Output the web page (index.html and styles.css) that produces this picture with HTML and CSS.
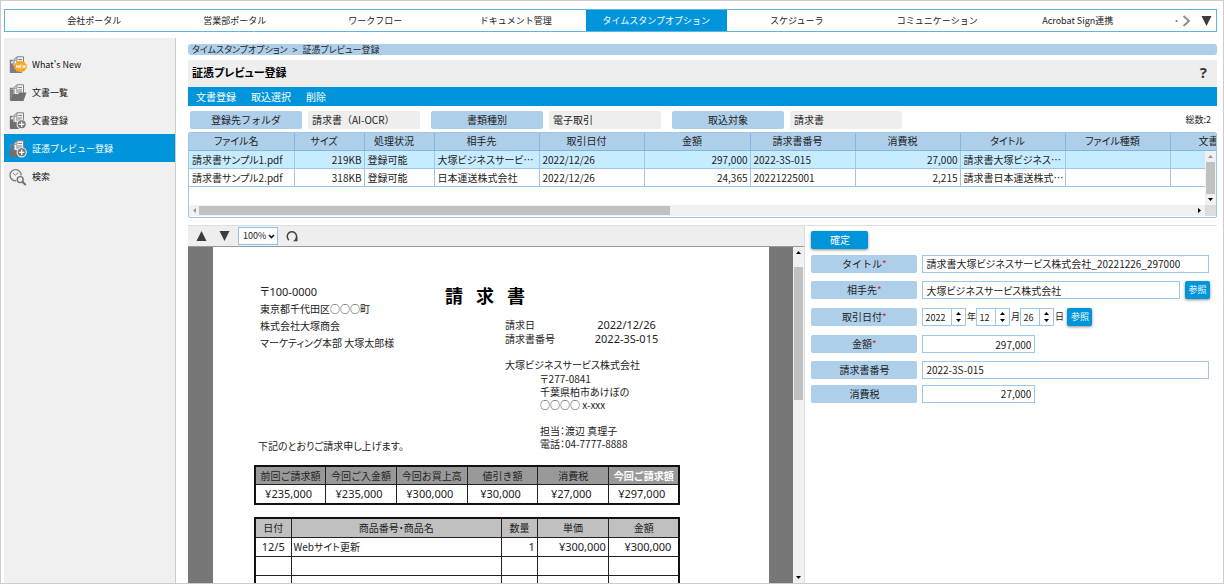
FILE: index.html
```html
<!DOCTYPE html>
<html lang="ja">
<head>
<meta charset="utf-8">
<meta name="viewport" content="width=device-width, initial-scale=1">
<title>証憑プレビュー登録</title>
<link rel="stylesheet" href="styles.css">
</head>
<body>
<svg class="defs" aria-hidden="true">
  <symbol id="i-back" viewBox="0 0 18 18">
    <path d="M1.5 16V4.5H4" fill="none" stroke="#808080" stroke-width="1.4"/>
    <path d="M5 12V3.4L8 .8h6.5V12z" fill="#f4f4f4" stroke="#808080"/>
    <path d="M5.2 4.2H8V1.2M9.3 3.5h3.7M7 6h6M7 8h6" fill="none" stroke="#808080"/>
  </symbol>
  <symbol id="i-new" viewBox="0 0 18 18">
    <use href="#i-back"/>
    <path d="M1 17V8l3-1v3h9v7z" fill="#7d7d7d"/>
    <path d="M11.5 4.5l1.8 1 2-.1.9 1.9 1.6 1.2-.2 2 .2 2-1.6 1.2-.9 1.9-2-.1-1.8 1-1.8-1-2 .1-.9-1.9-1.6-1.2.2-2-.2-2 1.600-1.200.9-1.900 2 .1z" fill="#f9a825"/>
    <path d="M7.500 12V9l2 3V9M12.600 9h-1.800v3h1.800M10.800 10.500h1.600M13.600 9l.7 3 .7-2.500.7 2.500.7-3" fill="none" stroke="#fff" stroke-width=".7"/>
  </symbol>
  <symbol id="i-open" viewBox="0 0 18 18">
    <use href="#i-back"/>
    <path d="M1.500 16.500V6L4.500 5v6z" fill="#808080"/>
    <path d="M1 17L4.500 10H9l1.500-1.500h7L14.500 17z" fill="#707070"/>
  </symbol>
  <symbol id="i-add" viewBox="0 0 18 18">
    <use href="#i-back"/>
    <path d="M1 17V8l3-1v3h9v7z" fill="#707070"/>
    <circle cx="12.700" cy="12.300" r="4.600" fill="#777" stroke="#f0f0f0" stroke-width="1.100"/>
    <path d="M12.700 9.700v5.200M10.100 12.300h5.200" stroke="#fff" stroke-width="1.300"/>
  </symbol>
  <symbol id="i-search" viewBox="0 0 18 18">
    <path d="M12.200 7.500A5.600 5.600 0 1 0 7 12.800" fill="none" stroke="#808080" stroke-width="1.400"/>
    <path d="M4 5l2.300 2.200L9.300 4.500" fill="none" stroke="#808080"/>
    <circle cx="11.200" cy="11.600" r="3" fill="none" stroke="#707070" stroke-width="1.400"/>
    <path d="M13.300 13.700l3.500 3.300" stroke="#707070" stroke-width="2"/>
  </symbol>
  <symbol id="i-up" viewBox="0 0 10 10"><path d="M5 0l5 10H0z"/></symbol>
  <symbol id="i-down" viewBox="0 0 10 10"><path d="M5 10L0 0h10z"/></symbol>
  <symbol id="i-tick-up" viewBox="0 0 5 3"><path d="M2.500 0L5 3H0z"/></symbol>
  <symbol id="i-tick-down" viewBox="0 0 5 3"><path d="M2.500 3L0 0h5z"/></symbol>
  <symbol id="i-tick-left" viewBox="0 0 3 5"><path d="M0 2.500L3 0v5z"/></symbol>
  <symbol id="i-tick-right" viewBox="0 0 3 5"><path d="M3 2.500L0 0v5z"/></symbol>
</svg>

<div class="frame">
  <nav class="tabs">
    <a href="#">会社ポータル</a>
    <a href="#">営業部ポータル</a>
    <a href="#">ワークフロー</a>
    <a href="#">ドキュメント管理</a>
    <a href="#" class="on" aria-current="page">タイムスタンプオプション</a>
    <a href="#">スケジューラ</a>
    <a href="#">コミュニケーション</a>
    <a href="#">Acrobat Sign連携</a>
    <div class="tabs-more">
      <span class="dot">・</span>
      <button class="plain" aria-label="次へ"><svg width="9" height="12" viewBox="0 0 9 12"><path d="M1.500 1l5.500 5-5.500 5" fill="none" stroke="#888" stroke-width="1.800"/></svg></button>
      <button class="plain" aria-label="メニュー"><svg width="11" height="10"><use href="#i-down"/></svg></button>
    </div>
  </nav>

  <div class="body">
    <aside class="side">
      <a href="#"><svg><use href="#i-new"/></svg>What's New</a>
      <a href="#"><svg><use href="#i-open"/></svg>文書一覧</a>
      <a href="#"><svg><use href="#i-add"/></svg>文書登録</a>
      <a href="#" class="on"><svg><use href="#i-add"/></svg>証憑プレビュー登録</a>
      <a href="#"><svg><use href="#i-search"/></svg>検索</a>
    </aside>

    <main class="main">
      <div class="crumbs"><a href="#">タイムスタンプオプション</a><span>&gt;</span><span>証憑プレビュー登録</span></div>
      <header class="title"><h1>証憑プレビュー登録</h1><button class="plain help" aria-label="ヘルプ">?</button></header>
      <div class="actions"><button>文書登録</button><button>取込選択</button><button>削除</button></div>

      <div class="filters">
        <div class="filter"><span class="tag">登録先フォルダ</span><span class="val">請求書（AI-OCR）</span></div>
        <div class="filter"><span class="tag">書類種別</span><span class="val">電子取引</span></div>
        <div class="filter"><span class="tag">取込対象</span><span class="val">請求書</span></div>
        <span class="count">総数:2</span>
      </div>

      <div class="grid">
        <table class="files">
          <colgroup><col class="w105"><col class="w70"><col class="w70"><col class="w105"><col class="w105"><col class="w106"><col class="w105"><col class="w105"><col class="w105"><col class="w105"><col class="w106"></colgroup>
          <thead><tr><th>ファイル名</th><th>サイズ</th><th>処理状況</th><th>相手先</th><th>取引日付</th><th>金額</th><th>請求書番号</th><th>消費税</th><th>タイトル</th><th>ファイル種類</th><th class="cut">文書</th></tr></thead>
          <tbody>
            <tr class="sel"><td>請求書サンプル1.pdf</td><td class="r">219KB</td><td>登録可能</td><td>大塚ビジネスサービ…</td><td>2022/12/26</td><td class="r">297,000</td><td>2022-3S-015</td><td class="r">27,000</td><td>請求書大塚ビジネス…</td><td></td><td></td></tr>
            <tr><td>請求書サンプル2.pdf</td><td class="r">318KB</td><td>登録可能</td><td>日本運送株式会社</td><td>2022/12/26</td><td class="r">24,365</td><td>20221225001</td><td class="r">2,215</td><td>請求書日本運送株式…</td><td></td><td></td></tr>
          </tbody>
        </table>
        <div class="vbar"><svg class="faint" width="5" height="3"><use href="#i-tick-up"/></svg><i></i><svg width="5" height="3"><use href="#i-tick-down"/></svg></div>
        <div class="hbar"><svg class="faint" width="3" height="5"><use href="#i-tick-left"/></svg><i></i><svg width="3" height="5"><use href="#i-tick-right"/></svg><b></b></div>
      </div>

      <div class="split">
        <section class="viewer">
          <div class="vtools">
            <button class="plain" aria-label="前のページ"><svg width="11" height="10"><use href="#i-up"/></svg></button>
            <button class="plain" aria-label="次のページ"><svg width="11" height="10"><use href="#i-down"/></svg></button>
            <label class="zoom"><select aria-label="倍率"><option>100%</option></select><svg width="7" height="5" viewBox="0 0 7 5"><path d="M1 1l2.500 2.500L6 1" fill="none" stroke="#111" stroke-width="1.600"/></svg></label>
            <button class="plain" aria-label="回転"><svg width="12" height="12" viewBox="0 0 12 12"><path d="M3 10.200A4.700 4.700 0 1 1 9.600 9.500" fill="none" stroke="#444" stroke-width="1.500"/><path d="M11.500 7v4.300H7z" fill="#444"/></svg></button>
          </div>
          <div class="stage">
            <article class="page">
              <div class="head">
                <div class="to">
                  <p><span class="n">〒100-0000</span></p><p>東京都千代田区○○○町</p><p>株式会社大塚商会</p><p>マーケティング本部 大塚太郎様</p>
                  <p class="note">下記のとおりご請求申し上げます。</p>
                </div>
                <div class="from">
                  <h2><span>請</span><span>求</span><span>書</span></h2>
                  <dl><dt>請求日</dt><dd>2022/12/26</dd><dt>請求書番号</dt><dd>2022-3S-015</dd></dl>
                  <p class="co">大塚ビジネスサービス株式会社</p>
                  <div class="addr"><p>〒277-0841</p><p>千葉県柏市あけぼの</p><p>○○○○ x-xxx</p><p class="gap">担当：渡辺 真理子</p><p>電話：04-7777-8888</p></div>
                </div>
              </div>
              <table class="sum">
                <thead><tr><th>前回ご請求額</th><th>今回ご入金額</th><th>今回お買上高</th><th>値引き額</th><th>消費税</th><th class="strong">今回ご請求額</th></tr></thead>
                <tbody><tr><td>¥235,000</td><td>¥235,000</td><td>¥300,000</td><td>¥30,000</td><td>¥27,000</td><td>¥297,000</td></tr></tbody>
              </table>
              <table class="items">
                <colgroup><col class="c1"><col><col class="c1"><col class="c2"><col class="c2"></colgroup>
                <thead><tr><th>日付</th><th>商品番号・商品名</th><th>数量</th><th>単価</th><th>金額</th></tr></thead>
                <tbody>
                  <tr><td class="n">12/5</td><td class="l">Webサイト更新</td><td class="n r">1</td><td class="n r">¥300,000</td><td class="n r in">¥300,000</td></tr>
                  <tr><td></td><td></td><td></td><td></td><td></td></tr>
                  <tr><td></td><td></td><td></td><td></td><td></td></tr>
                </tbody>
              </table>
            </article>
            <div class="pbar"><svg width="5" height="3"><use href="#i-tick-up"/></svg><i></i><svg width="5" height="3"><use href="#i-tick-down"/></svg></div>
          </div>
        </section>

        <form class="form">
          <button type="button" class="btn ok">確定</button>
          <div class="row r26"><label class="tag" for="f1">タイトル<em>*</em></label><input id="f1" value="請求書大塚ビジネスサービス株式会社_20221226_297000"></div>
          <div class="row r27 wide"><label class="tag" for="f2">相手先<em>*</em></label><input id="f2" value="大塚ビジネスサービス株式会社"><button type="button" class="btn ref">参照</button></div>
          <div class="row r27"><label class="tag" for="f3">取引日付<em>*</em></label>
            <div class="date">
              <span class="spin"><input id="f3" class="y" value="2022"><span class="step"><button type="button" aria-label="年を増やす"><svg><use href="#i-tick-up"/></svg></button><button type="button" aria-label="年を減らす"><svg><use href="#i-tick-down"/></svg></button></span></span><span class="u">年</span>
              <span class="spin"><input aria-label="月" value="12"><span class="step"><button type="button" aria-label="月を増やす"><svg><use href="#i-tick-up"/></svg></button><button type="button" aria-label="月を減らす"><svg><use href="#i-tick-down"/></svg></button></span></span><span class="u">月</span>
              <span class="spin"><input aria-label="日" value="26"><span class="step"><button type="button" aria-label="日を増やす"><svg><use href="#i-tick-up"/></svg></button><button type="button" aria-label="日を減らす"><svg><use href="#i-tick-down"/></svg></button></span></span><span class="u">日</span>
              <button type="button" class="btn ref">参照</button>
            </div>
          </div>
          <div class="row r27"><label class="tag" for="f4">金額<em>*</em></label><input id="f4" class="num" value="297,000"></div>
          <div class="row r24"><label class="tag" for="f5">請求書番号</label><input id="f5" value="2022-3S-015"></div>
          <div class="row r24"><label class="tag" for="f6">消費税</label><input id="f6" class="num" value="27,000"></div>
        </form>
      </div>
    </main>
  </div>
</div>
</body>
</html>
```
FILE: styles.css
```css
* { box-sizing: border-box; }
body {
  margin: 0;
  background: #fff;
  color: #222;
  font-family: "Noto Sans CJK JP", sans-serif;
  font-size: 10px;
  line-height: 14px;
}
h1, h2, p, dl, dd { margin: 0; }
a { color: inherit; text-decoration: none; }
button, input, select { font: inherit; color: inherit; margin: 0; }
button { cursor: pointer; }
table { border-collapse: collapse; table-layout: fixed; }
svg { display: block; }
.defs { position: absolute; width: 0; height: 0; }
.plain { display: flex; padding: 0; border: 0; background: none; color: #3c3c3c; fill: #3c3c3c; }

.frame {
  display: flex;
  flex-direction: column;
  height: calc(100vh - 1px);
  padding: 8px 6px 0 3px;
  border: 1px solid #ccc;
  overflow: hidden;
}

/* top tabs */
.tabs {
  display: grid;
  grid-template-columns: repeat(8, 1fr) 68px;
  flex: none;
  height: 23px;
  padding-left: 19px;
  border: 1px solid #5db5e4;
  font-size: 9px;
}
.tabs > a { display: flex; align-items: center; justify-content: center; padding-top: 1px; white-space: nowrap; }
.tabs > .on { background: #0095db; color: #fff; }
.tabs-more { display: flex; align-items: center; justify-content: flex-end; gap: 10px; padding-right: 4px; }
.tabs-more .dot { margin-right: -9px; color: #777; }

.body { display: flex; flex: 1; min-height: 0; padding-top: 6px; gap: 12px; }

/* side menu */
.side { flex: none; width: 172px; padding-top: 12px; background: #f0f0f0; border-right: 1px solid #ccc; color: #111; font-size: 9px; }
.side a { display: flex; align-items: center; gap: 5px; height: 28px; padding: 2px 0 0 5px; }
.side svg { width: 18px; height: 18px; }
.side .on { background: #0095db; color: #fff; }

.main { display: flex; flex: 1; flex-direction: column; min-width: 0; padding-top: 6px; }
.crumbs {
  display: flex;
  flex: none;
  align-items: center;
  gap: 5px;
  height: 11px;
  padding-left: 4px;
  border-radius: 3px;
  background: #aecfea;
  font-size: 9px;
  line-height: 11px;
  font-feature-settings: "palt";
}
.title { display: flex; flex: none; align-items: center; justify-content: space-between; height: 27px; margin-top: 5px; padding: 0 10px 4px 4px; background: #eee; }
.title h1 { color: #000; font-size: 11px; font-feature-settings: "palt"; }
.title .help { font: bold 15px "Noto Sans", sans-serif; }
.actions { display: flex; flex: none; gap: 15px; height: 19px; padding-left: 8px; background: #0095db; }
.actions button { padding: 0; border: 0; background: none; color: #fff; }

.filters { display: flex; flex: none; gap: 11px; height: 26px; padding: 5px 6px 3px 2px; line-height: 18px; }
.filter { display: flex; flex: 0 1 230px; gap: 6px; }
.filter .tag, .filter .val { flex: 1 1 50%; }
.tag { border-radius: 2px; background: #aecfea; text-align: center; line-height: 18px; white-space: nowrap; }
.val { padding-left: 4px; border-radius: 2px; background: #eee; white-space: nowrap; }
.count { margin-left: auto; font-size: 9px; }

/* file list */
.grid { position: relative; flex: none; border: 1px solid #9bc8ea; border-radius: 2px; overflow: hidden; }
.files { width: 1087px; font-feature-settings: "palt"; }
.w105 { width: 105px; }
.w106 { width: 106px; }
.w70 { width: 70px; }
.files th, .files td { height: 18px; padding: 0 3px; border: 0 solid #9bc8ea; border-width: 0 1px 1px 0; font-weight: 400; line-height: 17px; text-align: left; white-space: nowrap; overflow: hidden; }
.files th { height: 17px; padding: 0 10px 0 0; border-color: #80b6e0; background: #aecfea; line-height: 16px; text-align: center; }
.files th.cut { padding-left: 28px; text-align: left; }
.files .sel { background: #c8ecff; }
.files td.r { padding: 0 2px; text-align: right; }
.vbar { position: absolute; top: 18px; right: 0; display: flex; flex-direction: column; align-items: center; width: 11px; height: 54px; padding: 4px 0; background: #f1f1f1; }
.vbar i { width: 9px; height: 32px; margin: 4px 0 auto; background: #c1c1c1; }
.faint { fill: #999; }
.hbar { display: flex; align-items: center; height: 11px; margin: 18px 0 1px; padding-left: 4px; background: #f1f1f1; }
.hbar i { width: 46%; height: 9px; margin: 0 auto 0 3px; background: #c1c1c1; }
.hbar b { width: 11px; height: 11px; margin-left: 4px; background: #dcdcdc; }

.split { display: grid; grid-template-columns: 3fr 2fr; flex: 1; min-height: 0; margin-top: 7px; border-top: 1px solid #ddd; }

/* preview */
.viewer { display: flex; flex-direction: column; min-width: 0; min-height: 0; border-right: 1px solid #ddd; }
.vtools { display: flex; flex: none; align-items: center; gap: 12px; height: 21px; padding-left: 8px; background: #eee; border-bottom: 1px solid #999; }
.zoom { position: relative; margin: 0 -4px; }
.zoom select { display: block; width: 40px; height: 18px; padding: 0 0 0 4px; border: 1px solid #8fc3ea; border-radius: 0; background: #fff; appearance: none; font-size: 9px; }
.zoom svg { position: absolute; top: 7px; right: 3px; pointer-events: none; }
.stage { display: flex; flex: 1; min-height: 0; padding-left: 25px; background: #777; overflow: hidden; }
.page { flex: 1; padding: 36px 89px 0 41px; background: #fff; overflow: hidden; }
.pbar { display: flex; flex-direction: column; align-items: center; flex: none; width: 11px; margin-left: 24px; padding: 4px 0; background: #f1f1f1; }
.pbar i { width: 9px; height: 133px; margin: 13px 0 auto; background: #c1c1c1; }

.head { display: grid; grid-template-columns: 191px 1fr; white-space: nowrap; font-feature-settings: "palt"; }
.to { display: flex; flex-direction: column; padding-left: 6px; line-height: 17px; }
.to .note { margin: auto 0 -4px -2px; }
.from h2 { display: flex; gap: 13px; color: #000; font-size: 18px; line-height: 24px; }
.from dl { display: grid; grid-template-columns: 74px 95px; margin: 11px 0 0 60px; line-height: 14px; }
.from dd { justify-self: center; }
.from dd, .n { font-family: "Noto Sans", "Noto Sans CJK JP", sans-serif; font-size: 11px; }
.co { padding: 12px 0 0 60px; }
.addr { padding-left: 95px; line-height: 13px; }
.addr .gap { padding-top: 13px; }

.sum, .items { width: 100%; border: 2px solid #111; color: #222; }
.sum { margin-top: 15px; }
.items { margin-top: 12px; }
.sum th, .sum td, .items th, .items td { height: 19px; padding: 0; border: 1px solid #222; font-weight: 400; line-height: 17px; text-align: center; white-space: nowrap; }
.sum th { height: 18px; background: #999; }
.sum th.strong { color: #fff; font-weight: 700; }
.sum td { height: 20px; padding-right: 4px; font-family: "Noto Sans", "Noto Sans CJK JP", sans-serif; font-size: 11px; }
.items th { background: #c0c0c0; font-feature-settings: "palt"; }
.items .c1 { width: 36px; }
.items .c2 { width: 71px; }
.items td.l { padding-left: 2px; text-align: left; font-feature-settings: "palt"; }
.items td.r { padding-right: 2px; text-align: right; }
.items td.in { padding-right: 7px; }

/* entry form */
.form { min-width: 0; padding: 5px 8px 0 6px; }
.btn { padding: 0; border: 0; border-radius: 2px; background: #0095db; box-shadow: 0 1px 3px rgba(0, 0, 0, .45); color: #fff; line-height: 18px; }
.btn.ok { display: block; width: 57px; height: 18px; margin-bottom: 2px; }
.btn.ref { flex: none; width: 25px; height: 18px; font-size: 9px; }
.row { display: flex; align-items: center; gap: 5px; }
.row.wide { margin-right: -1px; }
.r24 { height: 24px; }
.r26 { height: 26px; }
.r27 { height: 27px; }
.row > .tag { flex: none; width: 106px; }
.tag em { color: #e02020; font-style: normal; }
.row input { flex: 1; min-width: 0; height: 18px; padding: 0 3px; border: 1px solid #9bc8ea; border-radius: 0; background: #fff; outline: 0; font-feature-settings: "palt"; }
.row input.num { flex: 0 1 113px; text-align: right; }
.date { display: flex; align-items: center; }
.row .spin { display: flex; }
.row .spin input { flex: none; width: 20px; padding: 0 2px; font-size: 9px; }
.row .spin .y { width: 30px; }
.step { display: flex; flex-direction: column; justify-content: center; gap: 4px; width: 15px; height: 18px; margin-left: -1px; border: 1px solid #9bc8ea; background: #fff; }
.step button { display: flex; justify-content: center; padding: 0; border: 0; background: none; }
.step svg { width: 5px; height: 3px; }
.u { width: 10px; text-align: center; font-size: 9px; }
.date .btn { margin-left: 3px; }
```
